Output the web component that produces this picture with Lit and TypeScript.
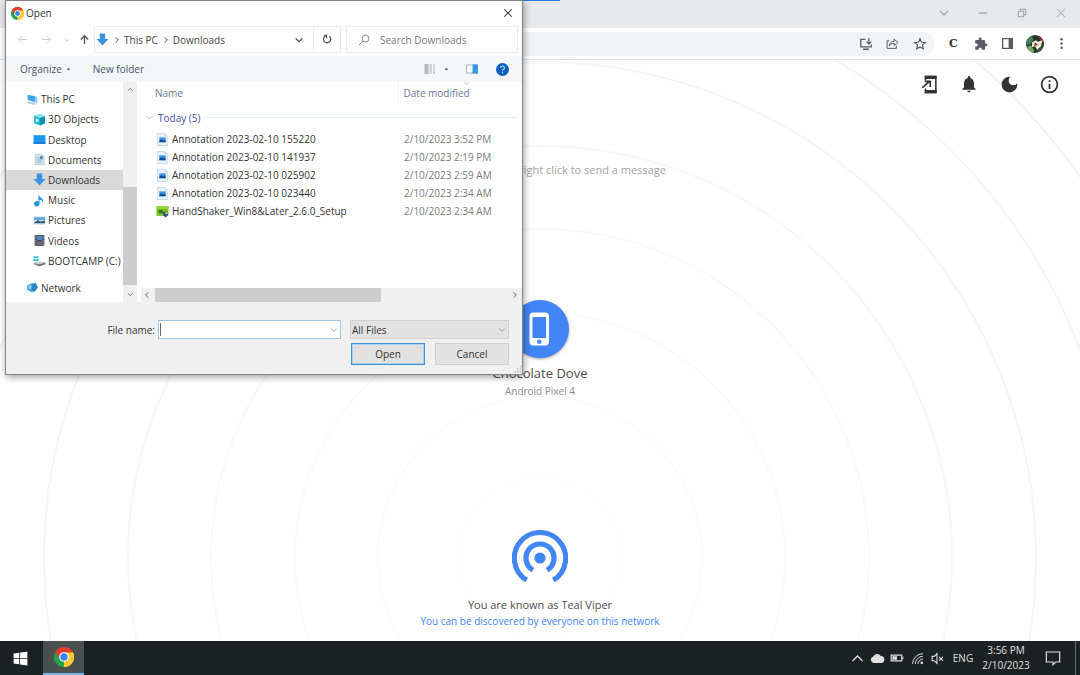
import { LitElement, html, svg, css } from "lit";
import { customElement } from "lit/decorators.js";

const icon = (body: unknown, size = 16, box = "0 0 24 24") =>
  html`<svg width=${size} height=${size} viewBox=${box} fill="none" aria-hidden="true">${body}</svg>`;

const line = (d: string, width = 2) =>
  svg`<path d=${d} stroke="currentColor" stroke-width=${width}/>`;
const solid = (d: string, fill = "currentColor") => svg`<path d=${d} fill=${fill}/>`;

const chevronDown = (size = 10, width = 3) => icon(line("M4 8l8 8 8-8", width), size);
const chevronUp = (size = 10, width = 3) => icon(line("M4 16l8-8 8 8", width), size);
const chevronRight = (size = 10, width = 3) => icon(line("M8 4l8 8-8 8", width), size);
const chevronLeft = (size = 10, width = 3) => icon(line("M16 4l-8 8 8 8", width), size);

const chrome = (size: number) =>
  icon(
    svg`<path d="M24 24L5.8 13.5A21 21 0 0 1 42.2 13.5z" fill="#e33b2e"/>
      <path d="M24 24L42.2 13.5A21 21 0 0 1 24 45z" fill="#fcc934"/>
      <path d="M24 24V45A21 21 0 0 1 5.8 13.5z" fill="#25a24a"/>
      <path d="M24 14.5H42.8A21 21 0 0 0 5.8 13.5L15.8 28.8z" fill="#e33b2e"/>
      <path d="M32.2 28.8L22.8 45A21 21 0 0 0 42.8 14.5H24z" fill="#fcc934"/>
      <circle cx="24" cy="24" r="10.2" fill="#fff"/><circle cx="24" cy="24" r="7.8" fill="#3b82ee"/>`,
    size,
    "3 3 42 42"
  );

const downArrow = svg`<path d="M7 1h10v10h6L12 23 1 11h6z" fill="#3a93e0"/>`;

const places = [
  { name: "This PC", top: true, art: svg`<path d="M3 3l14 3v11L3 13z" fill="#38a5e8"/><path d="M17 6l4 2v11l-4-2z" fill="#9cc9ea"/><path d="M3 15l16 4-3 3-13-3z" fill="#b8cddd"/>` },
  { name: "3D Objects", art: svg`<path d="M2 5l11-3 9 4v13l-9 4L2 19z" fill="#21b7cf"/><path d="M2 5l11-3 9 4-9 3z" fill="#8be5ee"/><path d="M13 9l9-3v13l-9 4z" fill="#0f8fae"/><path d="M5 10l5 1v6l-5-1z" fill="#b9f1f6"/>` },
  { name: "Desktop", art: svg`<path d="M1 4h22v16H1z" fill="#1e96f0"/><path d="M1 17h22v3H1z" fill="#1279cc"/>` },
  { name: "Documents", art: svg`<path d="M4 2h12l5 5v15H4z" fill="#d4e3ee" stroke="#a4bccd"/><path d="M7 9h5M7 13h10M7 17h10" stroke="#8fb4cf" stroke-width="2"/><path d="M13 6h5v5h-5z" fill="#4b88b5"/>` },
  { name: "Downloads", current: true, art: downArrow },
  { name: "Music", art: svg`<path d="M10 1c1 6 11 7 8 15-1-4-3-5-6-6v8a5 5 0 1 1-2-4z" fill="#1e8fe0"/>` },
  { name: "Pictures", art: svg`<path d="M1 4h22v16H1z" fill="#d6e6f2"/><path d="M2 6h20v5H2z" fill="#5ba8dc"/><path d="M2 16l7-5 5 3 8-2v5H2z" fill="#2d5f86"/>` },
  { name: "Videos", art: svg`<path d="M3 2h18v20H3z" fill="#3d4652"/><path d="M7 3h10v8H7z" fill="#4d8ac4"/><path d="M7 13h10v8H7z" fill="#756a78"/><path d="M5 3v18M19 3v18" stroke="#aeb6be" stroke-width="2" stroke-dasharray="2 2"/>` },
  { name: "BOOTCAMP (C:)", art: svg`<path d="M1 4h4v4H1zM6 4h4v4H6zM1 9h4v4H1zM6 9h4v4H6z" fill="#1bb6d9"/><path d="M2 16l9 3 12-4v4l-11 4-10-4z" fill="#717b84"/><path d="M2 16l10-2 11 1-12 4z" fill="#c5ccd2"/>` },
  { name: "Network", top: true, gap: true, art: svg`<path d="M2 8l9-4 3 1v14l-3 2-9-5z" fill="#4aa9e0"/><path d="M9 6l9-3 4 9-6 8-7-3z" fill="#2785c6"/><path d="M5 9l5-2v8l-5-1z" fill="#9bd6f4"/>` },
];

const picture = svg`<path d="M3 1h13l5 5v17H3z" fill="#eaf3fb" stroke="#a3c3df"/><path d="M16 1v5h5z" fill="#bcd6ec"/><path d="M6 8h12v9H6z" fill="#3f97df"/><path d="M6 15l4-4 3 3 2-2 3 3v2H6z" fill="#0e4f91"/>`;
const setup = svg`<path d="M1 2h22v18H1z" fill="#72bf1d"/><path d="M1 2h22v5H1z" fill="#99d845"/><path d="M4 12c3-4 8-3 10 1l-3 3c-3-1-5-1-7-4z" fill="#35760d"/><path d="M13 13l9-1v7l-4 4-5-4z" fill="#28549c"/><path d="M17.500 13h4v4h-4z" fill="#f2c63a"/>`;

const files = [
  { name: "Annotation 2023-02-10 155220", date: "2/10/2023 3:52 PM", art: picture },
  { name: "Annotation 2023-02-10 141937", date: "2/10/2023 2:19 PM", art: picture },
  { name: "Annotation 2023-02-10 025902", date: "2/10/2023 2:59 AM", art: picture },
  { name: "Annotation 2023-02-10 023440", date: "2/10/2023 2:34 AM", art: picture },
  { name: "HandShaker_Win8&Later_2.6.0_Setup", date: "2/10/2023 2:34 AM", art: setup },
];

const shared = css`
  :host {
    display: block;
    font-family: "Open Sans", "Noto Sans", sans-serif;
    font-size: 10px;
    line-height: 14px;
  }
  * { box-sizing: border-box; }
  svg { display: block; flex: none; }
  button, input, select {
    font: inherit;
    color: inherit;
    border: 0;
    padding: 0;
    margin: 0;
    background: none;
    border-radius: 0;
    outline: none;
  }
  button { display: flex; align-items: center; justify-content: center; }
`;

@customElement("file-dialog")
class FileDialog extends LitElement {
  static styles = [
    shared,
    css`
      :host {
        color: #333;
        background: #fff;
        border: 1px solid #858585;
        box-shadow: 1px 2px 7px rgba(0, 0, 0, 0.4);
      }
      .title { display: flex; align-items: center; height: 24px; padding: 0 9px 0 5px; gap: 2px; }
      .title h2 { flex: 1; margin: 0; font-size: 10px; font-weight: 400; }
      .nav { display: flex; height: 31px; padding: 1px 4px 3px; }
      .step { width: 24px; color: #c9c9c9; }
      .recent { width: 18px; color: #c9c9c9; }
      .up { width: 16px; margin-right: 2px; color: #555; }
      .address {
        flex: 1; display: flex; align-items: center; gap: 4px;
        border: 1px solid #ececec; padding-left: 1px; color: #444;
      }
      .crumb { margin-left: -1px; }
      .address .more { margin-left: auto; width: 20px; align-self: stretch; }
      .address .refresh { width: 27px; align-self: stretch; border-left: 1px solid #ececec; }
      .search {
        width: 172px; margin-left: 5px; display: flex; align-items: center; gap: 10px;
        border: 1px solid #ececec; padding-left: 11px; color: #8a8a8a;
      }
      .search input { flex: 1; min-width: 0; }
      .search input::placeholder { color: #777; opacity: 1; }
      .tools {
        display: flex; align-items: center; height: 26px; padding: 0 13px 0 14px;
        background: #f4f6f7; color: #44546e;
      }
      .organize { gap: 4px; margin-right: 22px; }
      .view { margin-left: auto; gap: 8px; margin-right: 17px; }
      .pane { margin-right: 18px; }
      .body { display: grid; grid-template-columns: 117px 14px 1fr; height: 220px; }
      .places { display: flex; flex-direction: column; margin: 0; padding: 7px 0 4px; list-style: none; }
      .places li { flex: 1; display: flex; }
      .places .gap { margin-top: 7px; }
      .places a {
        flex: 1; display: flex; align-items: center; gap: 2px; padding-left: 27px;
        color: inherit; text-decoration: none; white-space: nowrap;
      }
      .places .top a { padding-left: 20px; }
      .places .current { background: #d9d9d9; }
      .bar { background: #f0f0f0; color: #606060; display: flex; }
      .bar.vertical { flex-direction: column; align-items: center; justify-content: space-between; padding: 4px 0; }
      .bar.vertical .thumb { width: 14px; height: 98px; margin: auto 0 6px; }
      .bar.horizontal { height: 14px; align-items: center; margin-left: 4px; padding: 0 3px 0 2px; justify-content: space-between; }
      .bar.horizontal .thumb { width: 60%; height: 14px; margin: 0 auto 0 4px; }
      .thumb { background: #cdcdcd; }
      .list { display: flex; flex-direction: column; justify-content: space-between; min-width: 0; }
      table { width: 100%; border-collapse: collapse; table-layout: fixed; }
      th, td { padding: 0; text-align: left; font-weight: 400; white-space: nowrap; }
      thead th { height: 22px; padding-left: 18px; color: #6a7690; }
      thead th.date { position: relative; width: 124px; padding-left: 5px; border-left: 1px solid #eef2f6; }
      .sort { position: absolute; left: 64px; top: -2px; color: #999; }
      .group th { height: 26px; padding-top: 1px; color: #44509c; }
      .group div { display: flex; align-items: center; gap: 4px; padding: 0 5px 0 8px; }
      .group hr { flex: 1; border: 0; border-top: 1px solid #e8edf0; margin: 0 0 0 2px; }
      .file { height: 18px; }
      .file div { display: flex; align-items: center; gap: 3px; padding-left: 19px; }
      .file .when { padding-left: 6px; color: #7a7a7a; }
      .group svg { color: #aaa; }
      .foot { position: relative; background: #f0f0f0; padding: 18px 13px 9px; display: grid; gap: 4px; }
      .row { display: flex; align-items: center; justify-content: flex-end; }
      .combo {
        width: 183px; height: 19px; margin: 0 9px 0 3px; padding: 0 2px 0 1px; display: flex; align-items: center;
        background: #fff; border: 1px solid #9cc6ea; color: #777;
      }
      .caret { width: 1px; height: 13px; background: #6a6a6a; }
      .combo input { flex: 1; min-width: 0; color: #222; }
      .select { width: 159px; height: 19px; display: grid; align-items: center; background: #e2e2e2; border: 1px solid #d2d2d2; }
      .select select { grid-area: 1 / 1; appearance: none; height: 17px; padding-left: 1px; }
      .select svg { grid-area: 1 / 1; justify-self: end; margin-right: 2px; color: #777; pointer-events: none; }
      .actions { gap: 10px; }
      .action { width: 74px; height: 22px; background: #e1e1e1; border: 1px solid #cfcfcf; }
      .action.primary { border: 1px solid #3d92dc; box-shadow: inset 0 0 0 1px #a9cfee; }
      .grip { position: absolute; right: 0; bottom: 0; color: #bdbdbd; }
    `,
  ];

  render() {
    return html`
      <div class="title">
        ${chrome(13)}
        <h2>Open</h2>
        <button aria-label="Close">${icon(line("M3 3l18 18M21 3L3 21", 2.5), 10)}</button>
      </div>
      <div class="nav">
        <button class="step" aria-label="Back">${icon(line("M22 12H3M11 4l-8 8 8 8"), 11)}</button>
        <button class="step" aria-label="Forward">${icon(line("M2 12h19M13 4l8 8-8 8"), 11)}</button>
        <button class="recent" aria-label="Recent locations">${chevronDown(6)}</button>
        <button class="up" aria-label="Up">${icon(line("M12 22V4M4 12l8-8 8 8", 3), 11)}</button>
        <div class="address">
          ${icon(downArrow, 13)} ${chevronRight(8, 3)}
          <span class="crumb">This PC</span>
          ${chevronRight(8, 3)}
          <span class="crumb">Downloads</span>
          <button class="more" aria-label="Previous locations">${chevronDown(10, 3)}</button>
          <button class="refresh" aria-label="Refresh">
            ${icon(line("M16 5a8 8 0 1 1-8-1M5 3h5v6", 2.5), 11)}
          </button>
        </div>
        <label class="search">
          ${icon(svg`<circle cx="15" cy="9" r="7" stroke="currentColor" stroke-width="2"/><path d="M10 14l-8 8" stroke="currentColor" stroke-width="2"/>`, 12)}
          <input type="text" aria-label="Search Downloads" placeholder="Search Downloads" />
        </label>
      </div>
      <div class="tools">
        <button class="organize">Organize ${icon(solid("M3 7h18l-9 10z"), 5)}</button>
        <button>New folder</button>
        <button class="view" aria-label="Change view">
          ${icon(svg`<path d="M1 2h8v20H1z" fill="#b9bcc0"/><path d="M11 2h5v20h-5zM18 2h4v20h-4z" fill="#d0d3d6"/>`, 12)}
          ${icon(solid("M3 7h18l-9 10z"), 5)}
        </button>
        <button class="pane" aria-label="Preview pane">
          ${icon(svg`<path d="M1 4h22v16H1z" fill="#fff" stroke="#a9b4bd" stroke-width="2"/><path d="M13 3h11v18H13z" fill="#3696dc"/>`, 12)}
        </button>
        <button aria-label="Help">
          ${icon(svg`<circle cx="12" cy="12" r="12" fill="#0a5fc0"/><path d="M8.500 9a3.500 3.500 0 1 1 5.200 3c-1.200.8-1.700 1.300-1.700 3M12 17v2.500" stroke="#cfe3f8" stroke-width="2"/>`, 13)}
        </button>
      </div>
      <div class="body">
        <ul class="places">
          ${places.map(
            (p) => html`<li class="${p.top ? "top" : ""} ${p.current ? "current" : ""} ${p.gap ? "gap" : ""}">
              <a href="#">${icon(p.art, 13)} ${p.name}</a>
            </li>`
          )}
        </ul>
        <div class="bar vertical">${chevronUp(7, 3)}<div class="thumb"></div>${chevronDown(7, 3)}</div>
        <div class="list">
          <table>
            <thead>
              <tr>
                <th>Name</th>
                <th class="date">Date modified <span class="sort">${chevronDown(7, 2)}</span></th>
              </tr>
            </thead>
            <tbody>
              <tr class="group">
                <th colspan="2"><div>${chevronDown(9, 2)} Today (5)<hr /></div></th>
              </tr>
              ${files.map(
                (f) => html`<tr class="file">
                  <td><div>${icon(f.art, 13)} ${f.name}</div></td>
                  <td class="when">${f.date}</td>
                </tr>`
              )}
            </tbody>
          </table>
          <div class="bar horizontal">${chevronLeft(8, 3)}<div class="thumb"></div>${chevronRight(8, 3)}</div>
        </div>
      </div>
      <div class="foot">
        <div class="row">
          <label for="name">File name:</label>
          <div class="combo"><span class="caret"></span><input id="name" type="text" />${chevronDown(8, 2)}</div>
          <div class="select">
            <select aria-label="File type"><option>All Files</option></select>
            ${chevronDown(8, 2)}
          </div>
        </div>
        <div class="row actions">
          <button class="action primary">Open</button>
          <button class="action">Cancel</button>
        </div>
        <span class="grip">${icon(svg`<path d="M18 2h4v4h-4zM11 9h4v4h-4zM18 9h4v4h-4zM4 16h4v4H4zM11 16h4v4h-4zM18 16h4v4h-4z" fill="currentColor"/>`, 9)}</span>
      </div>
    `;
  }
}

const rings = [81, 162, 245, 329, 412, 496, 579, 661];

@customElement("app-root")
class AppRoot extends LitElement {
  static styles = [
    shared,
    css`
      :host {
        position: relative; display: grid; grid-template-rows: 28px 32px 1fr 34px;
        height: 100vh; overflow: hidden; background: #fff;
      }
      .strip { display: flex; justify-content: flex-end; padding-bottom: 3px; background: #e7e8eb; color: #a2a4a8; }
      .strip button { width: 39px; }
      .toolbar { display: flex; align-items: center; padding: 0 5px 0 94px; border-bottom: 1px solid #dedfe1; color: #5a5d61; }
      .omnibox {
        flex: 1; display: flex; justify-content: flex-end; height: 24px; margin-right: 5px; padding-right: 2px;
        border-radius: 12px; background: #f1f3f4;
      }
      .toolbar button { width: 27px; height: 24px; }
      .toolbar .letter { font: 700 11px "DejaVu Serif", serif; color: #333; }
      .page { position: relative; display: grid; grid-template-rows: 1fr auto 1fr; overflow: hidden; text-align: center; color: #4a4a4a; }
      .rings { position: absolute; left: 50%; bottom: -617px; margin-left: -700px; }
      .top, .peer, .self { position: relative; }
      .tools { display: flex; justify-content: flex-end; padding: 4px 11px 0; color: #333; }
      .tools button { width: 40px; height: 40px; }
      .hint { margin: 57px 0 0; font-size: 11px; line-height: 18px; color: #a3a3a3; }
      .peer { justify-self: center; display: grid; justify-items: center; padding-bottom: 2px; }
      .disc { width: 58px; height: 58px; border-radius: 50%; background: #4285f4; color: #fff; box-shadow: 0 1px 3px rgba(0, 0, 0, 0.4); }
      .name { margin-top: 6px; font-size: 13px; line-height: 18px; }
      .device { line-height: 18px; color: #8d8d8d; }
      .self { align-self: end; display: grid; justify-items: center; padding-bottom: 12px; color: #4285f4; }
      .self p { margin: 0; line-height: 16px; }
      .self .known { margin-top: 11px; font-size: 11px; color: #505050; }
      .taskbar { position: relative; display: flex; align-items: stretch; background: #1c2223; color: #e0e0e0; }
      .start { width: 40px; margin-right: 3px; }
      .running { width: 41px; background: #4a4f50; border-bottom: 2px solid #76b4e4; }
      .tray { margin-left: auto; display: flex; align-items: center; }
      .tray button { width: 20px; height: 34px; }
      .tray .lang { width: 32px; }
      .clock { width: 54px; line-height: 15px; text-align: center; }
      .tray .notes { width: 39px; margin-right: 3px; }
      .peek { width: 5px; height: 34px; border-left: 1px solid #6a6f70; }
      .dialog { position: absolute; left: 5px; top: 0; width: 518px; }
      .accent { position: absolute; left: 438px; top: 0; width: 122px; height: 1px; background: #2b7cd0; }
    `,
  ];

  render() {
    return html`
      <header class="strip">
        <span class="accent"></span>
        <button aria-label="Search tabs">${chevronDown(12, 3)}</button>
        <button aria-label="Minimize">${icon(line("M2 12h20", 3), 10)}</button>
        <button aria-label="Restore">
          ${icon(svg`<path d="M3 8h13v13H3zM8 8V3h13v13h-5" stroke="currentColor" stroke-width="2.500"/>`, 10)}
        </button>
        <button aria-label="Close window">${icon(line("M3 3l18 18M21 3L3 21", 2.5), 10)}</button>
      </header>
      <nav class="toolbar">
        <div class="omnibox">
          <button aria-label="Install app">
            ${icon(svg`<path d="M11 4H3v13h18v-4M7 21h10M17 2v9M13 8l4 4 4-4" stroke="currentColor" stroke-width="2.200"/>`, 14)}
          </button>
          <button aria-label="Share">
            ${icon(svg`<path d="M6 7H2v14h17v-5M6 16c1-6 5-8 9-8V4l7 6-7 6v-4c-4 0-7 1-9 4z" stroke="currentColor" stroke-width="1.800"/>`, 13)}
          </button>
          <button aria-label="Bookmark">
            ${icon(svg`<path d="M12 3l2.700 6 6.500.6-5 4.300 1.500 6.500L12 17l-5.700 3.400 1.500-6.500-5-4.300 6.500-.6z" stroke="currentColor" stroke-width="2"/>`, 14)}
          </button>
        </div>
        <button class="letter" aria-label="Extension C">C</button>
        <button aria-label="Extensions">
          ${icon(solid("M20.500 11H19V7a2 2 0 0 0-2-2h-4V3.500a2.500 2.500 0 0 0-5 0V5H4a2 2 0 0 0-2 2v3.800h1.500a2.700 2.700 0 0 1 0 5.400H2V20a2 2 0 0 0 2 2h3.800v-1.500a2.700 2.700 0 0 1 5.400 0V22H17a2 2 0 0 0 2-2v-4h1.500a2.500 2.500 0 0 0 0-5z"), 14)}
        </button>
        <button aria-label="Side panel">
          ${icon(svg`<path d="M3 3h18v18H3z" stroke="currentColor" stroke-width="2.500"/><path d="M14 3h7v18h-7z" fill="currentColor"/>`, 13)}
        </button>
        <button aria-label="Profile">
          ${icon(svg`<defs><clipPath id="face"><circle cx="12" cy="12" r="12"/></clipPath></defs>
            <g clip-path="url(#face)"><path d="M0 0h24v24H0z" fill="#25352d"/><path d="M0 4l7-4 3 6-5 7-5-1z" fill="#477d5c"/><path d="M16 0l8 4v8l-5-4z" fill="#7b3036"/><path d="M8 10l5-3 3 2 6-2-2 8-5 5-3-5-4 1z" fill="#f0e6d2"/><path d="M2 15l5-1 4 7-3 3-6-3z" fill="#79a764"/><path d="M12 10l4 3-5 2z" fill="#5b3c2c"/><path d="M17 18l5-4v8h-6z" fill="#315b43"/></g>`, 18)}
        </button>
        <button aria-label="Menu">
          ${icon(svg`<circle cx="12" cy="4" r="2.300" fill="currentColor"/><circle cx="12" cy="12" r="2.300" fill="currentColor"/><circle cx="12" cy="20" r="2.300" fill="currentColor"/>`, 13)}
        </button>
      </nav>
      <main class="page">
        <svg class="rings" width="1400" height="1400" viewBox="-700 -700 1400 1400" fill="none" stroke-width="2" aria-hidden="true">
          ${rings.map((r, i) => svg`<circle r=${r} stroke="#000" stroke-opacity=${0.008 + i * 0.006}/>`)}
        </svg>
        <div class="top">
          <div class="tools">
            <button aria-label="Install">
              ${icon(svg`<path d="M7 7V2h13v20H7v-5" stroke="currentColor" stroke-width="2"/><path d="M6 1h15v4H6zM6 19h15v4H6z" fill="currentColor"/><path d="M3 16L12 8M6 8h7v7" stroke="currentColor" stroke-width="2.200"/>`, 19)}
            </button>
            <button aria-label="Notifications">
              ${icon(solid("M12 22a2 2 0 0 0 2-2h-4a2 2 0 0 0 2 2zm6-6v-5c0-3.070-1.640-5.640-4.500-6.320V4a1.500 1.500 0 0 0-3 0v.68C7.630 5.360 6 7.920 6 11v5l-2 2v1h16v-1z"), 20)}
            </button>
            <button aria-label="Dark mode">
              ${icon(solid("M12 3a9 9 0 1 0 9 9c0-.46-.04-.92-.1-1.360a5.400 5.400 0 0 1-4.400 2.260 5.400 5.400 0 0 1-3.140-9.800C12.920 3.040 12.460 3 12 3z"), 21)}
            </button>
            <button aria-label="About">
              ${icon(svg`<circle cx="12" cy="12" r="9" stroke="currentColor" stroke-width="2"/><path d="M11 7h2v2h-2zM11 11h2v6h-2z" fill="currentColor"/>`, 21)}
            </button>
          </div>
          <p class="hint">Click to send files or right click to send a message</p>
        </div>
        <div class="peer">
          <button class="disc" aria-label="Send to Chocolate Dove">
            ${icon(solid("M15.500 1h-8A2.500 2.500 0 0 0 5 3.500v17A2.500 2.500 0 0 0 7.500 23h8a2.500 2.500 0 0 0 2.500-2.500v-17A2.500 2.500 0 0 0 15.500 1zm-4 21a1.500 1.500 0 1 1 0-3 1.500 1.500 0 0 1 0 3zm4.500-4H7V4h9z"), 36)}
          </button>
          <span class="name">Chocolate Dove</span>
          <span class="device">Android Pixel 4</span>
        </div>
        <footer class="self">
          ${icon(svg`<circle cx="12" cy="12" r="2.400" fill="currentColor"/>
            <path d="M9 17.200a6 6 0 1 1 6 0M6.300 21.500a11 11 0 1 1 11.400 0" stroke="currentColor" stroke-width="2.200"/>`, 56)}
          <p class="known">You are known as Teal Viper</p>
          <p>You can be discovered by everyone on this network</p>
        </footer>
      </main>
      <footer class="taskbar">
        <button class="start" aria-label="Start">
          ${icon(solid("M1 4l9-1.300v8.700H1zM11.300 2.500L23 1v10.400H11.300zM1 12.700h9v8.600L1 20zM11.300 12.700H23V23l-11.700-1.600z", "#fff"), 15)}
        </button>
        <button class="running" aria-label="Google Chrome">${chrome(20)}</button>
        <div class="tray">
          <button aria-label="Hidden icons">${chevronUp(15, 2)}</button>
          <button aria-label="OneDrive">${icon(solid("M6 19a5 5 0 0 1-1-9.800 7 7 0 0 1 12.500-1A5.500 5.500 0 0 1 19 19z"), 15)}</button>
          <button aria-label="Battery">
            ${icon(svg`<path d="M2 7h18v10H2z" stroke="currentColor" stroke-width="2"/><path d="M4 9h8v6H4zM21 10h2v4h-2z" fill="currentColor"/>`, 14)}
          </button>
          <button aria-label="Wi-Fi">
            ${icon(svg`<path d="M3 22A19 19 0 0 1 22 3M8 22A14 14 0 0 1 22 8M13 22a9 9 0 0 1 9-9" stroke="currentColor" stroke-width="1.800"/><circle cx="20" cy="20" r="2.500" fill="currentColor"/>`, 13)}
          </button>
          <button aria-label="Muted">
            ${icon(svg`<path d="M2 8h4l5-5v18l-5-5H2zM15 9l7 7M22 9l-7 7" stroke="currentColor" stroke-width="2"/>`, 13)}
          </button>
          <button class="lang">ENG</button>
          <div class="clock">3:56 PM<br />2/10/2023</div>
          <button class="notes" aria-label="Notifications">
            ${icon(svg`<path d="M2 3h20v15h-6l-4 4v-4H2z" stroke="currentColor" stroke-width="1.800"/>`, 16)}
          </button>
          <div class="peek"></div>
        </div>
      </footer>
      <file-dialog class="dialog" role="dialog" aria-label="Open"></file-dialog>
    `;
  }
}
